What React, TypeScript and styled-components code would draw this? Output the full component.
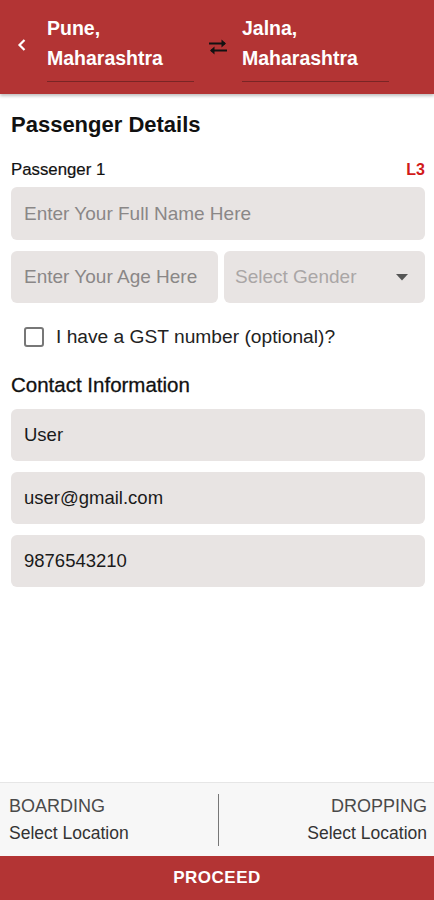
import { FC } from "react";
import styled, { createGlobalStyle } from "styled-components";

const GlobalStyle = createGlobalStyle`
  html, body {
    margin: 0;
    padding: 0;
    background: #ffffff;
    font-family: "Liberation Sans", Arial, Helvetica, sans-serif;
  }
  * { box-sizing: border-box; }
`;

const Page = styled.div`
  width: 434px;
  height: 900px;
  display: flex;
  flex-direction: column;
  background: #fff;
  font-family: "Liberation Sans", Arial, sans-serif;
`;

const Header = styled.header`
  height: 94px;
  background: #b33434;
  display: flex;
  align-items: flex-start;
  padding: 0 0 0 12px;
  box-shadow: 0 2px 3px rgba(0, 0, 0, 0.25);
  position: relative;
  z-index: 1;
`;

const BackButton = styled.button`
  background: none;
  border: none;
  padding: 0;
  width: 20px;
  height: 20px;
  margin-top: 35px;
  margin-right: 15px;
  display: flex;
  align-items: center;
  justify-content: center;
`;

const City = styled.div`
  width: 147px;
  padding-top: 13px;
  height: 82px;
  border-bottom: 1px solid #7a2525;
  color: #fff;
  font-weight: 700;
  font-size: 19.5px;
  line-height: 30px;
`;

const SwapIcon = styled.div`
  width: 48px;
  display: flex;
  justify-content: center;
  margin-top: 38px;
`;

const Body = styled.main`
  flex: 1;
  padding: 18px 9px 0 11px;
  display: flex;
  flex-direction: column;
`;

const Title = styled.h1`
  margin: 0;
  font-size: 22px;
  font-weight: 700;
  color: #111;
  line-height: 26px;
`;

const LabelRow = styled.div`
  display: flex;
  justify-content: space-between;
  align-items: center;
  margin-top: 23px;
  margin-bottom: 8px;
  line-height: 18px;
`;

const SmallLabel = styled.span`
  font-size: 16.8px;
  color: #111;
  -webkit-text-stroke: 0.2px #111;
`;

const Level = styled.span`
  font-size: 16px;
  font-weight: 700;
  color: #d11a1a;
`;

const Field = styled.div<{ $muted?: boolean; $grow?: boolean; $h?: number }>`
  height: ${(p) => p.$h ?? 53}px;
  background: #e8e4e3;
  border-radius: 6px;
  display: flex;
  align-items: center;
  padding: 0 13px;
  font-size: ${(p) => (p.$muted ? "19px" : "18.5px")};
  color: ${(p) => (p.$muted ? "#8a8787" : "#1a1a1a")};
  flex: ${(p) => (p.$grow ? 1 : "none")};
  white-space: nowrap;
`;

const AgeField = styled(Field)`
  width: 207px;
`;

const Row = styled.div`
  display: flex;
  gap: 6px;
  margin-top: 11px;
`;

const SelectField = styled(Field)`
  justify-content: space-between;
  color: #aaa6a6;
  padding: 0 17px 0 11px;
`;

const CheckRow = styled.label`
  display: flex;
  align-items: center;
  gap: 12px;
  margin: 24px 0 0 13px;
  font-size: 19.2px;
  line-height: 20px;
  color: #222;
`;

const CheckBox = styled.span`
  width: 20px;
  height: 20px;
  border: 2px solid #777;
  border-radius: 3px;
  background: #fff;
`;

const SubTitle = styled.h2`
  margin: 27px 0 13px;
  font-size: 20.5px;
  line-height: 22px;
  font-weight: 400;
  color: #111;
  -webkit-text-stroke: 0.3px #111;
`;

const Stack = styled.div`
  display: flex;
  flex-direction: column;
  gap: 11px;
`;

const Footer = styled.footer`
  display: flex;
  flex-direction: column;
`;

const PointBar = styled.div`
  height: 74px;
  background: #f7f7f7;
  border-top: 1px solid #e6e6e6;
  display: flex;
  align-items: center;
`;

const Point = styled.div<{ $right?: boolean }>`
  flex: 1;
  display: flex;
  flex-direction: column;
  align-items: ${(p) => (p.$right ? "flex-end" : "flex-start")};
  padding: 0 ${(p) => (p.$right ? "7px" : "0")} 0 ${(p) => (p.$right ? "0" : "9px")};
  gap: 6px;
`;

const PointTitle = styled.span`
  font-size: 18px;
  color: #4a4a4a;
`;

const PointValue = styled.span`
  font-size: 17.5px;
  color: #333;
`;

const Divider = styled.div`
  width: 1px;
  height: 52px;
  background: #777;
`;

const Proceed = styled.button`
  height: 44px;
  border: none;
  background: #b33434;
  color: #fff;
  font-family: inherit;
  font-weight: 700;
  font-size: 17px;
  letter-spacing: 0.5px;
`;

const App: FC = () => {
  return (
    <Page>
      <GlobalStyle />
      <Header>
        <BackButton>
          <svg width="12" height="16" viewBox="0 0 12 16">
            <path d="M8.5 3 L3.5 8 L8.5 13" fill="none" stroke="#fff" strokeWidth="2.2" />
          </svg>
        </BackButton>
        <City>
          Pune,
          <br />
          Maharashtra
        </City>
        <SwapIcon>
          <svg width="22" height="18" viewBox="0 0 22 18">
            <path d="M2 5.5 H18" stroke="#111" strokeWidth="2" />
            <path d="M14.5 1.5 L19 5.5 L14.5 9.5" fill="#111" stroke="none" />
            <path d="M20 12.5 H4" stroke="#111" strokeWidth="2" />
            <path d="M7.5 8.5 L3 12.5 L7.5 16.5" fill="#111" stroke="none" />
          </svg>
        </SwapIcon>
        <City>
          Jalna,
          <br />
          Maharashtra
        </City>
      </Header>

      <Body>
        <Title>Passenger Details</Title>
        <LabelRow>
          <SmallLabel>Passenger 1</SmallLabel>
          <Level>L3</Level>
        </LabelRow>
        <Field $muted>Enter Your Full Name Here</Field>
        <Row>
          <AgeField $muted $h={52}>Enter Your Age Here</AgeField>
          <SelectField $muted $grow $h={52}>
            Select Gender
            <svg width="12" height="7" viewBox="0 0 12 7">
              <path d="M0 0 H12 L6 6.5 Z" fill="#555" />
            </svg>
          </SelectField>
        </Row>
        <CheckRow>
          <CheckBox />I have a GST number (optional)?
        </CheckRow>
        <SubTitle>Contact Information</SubTitle>
        <Stack>
          <Field $h={52}>User</Field>
          <Field $h={52}>user@gmail.com</Field>
          <Field $h={52}>9876543210</Field>
        </Stack>
      </Body>

      <Footer>
        <PointBar>
          <Point>
            <PointTitle>BOARDING</PointTitle>
            <PointValue>Select Location</PointValue>
          </Point>
          <Divider />
          <Point $right>
            <PointTitle>DROPPING</PointTitle>
            <PointValue>Select Location</PointValue>
          </Point>
        </PointBar>
        <Proceed>PROCEED</Proceed>
      </Footer>
    </Page>
  );
};

export default App;
